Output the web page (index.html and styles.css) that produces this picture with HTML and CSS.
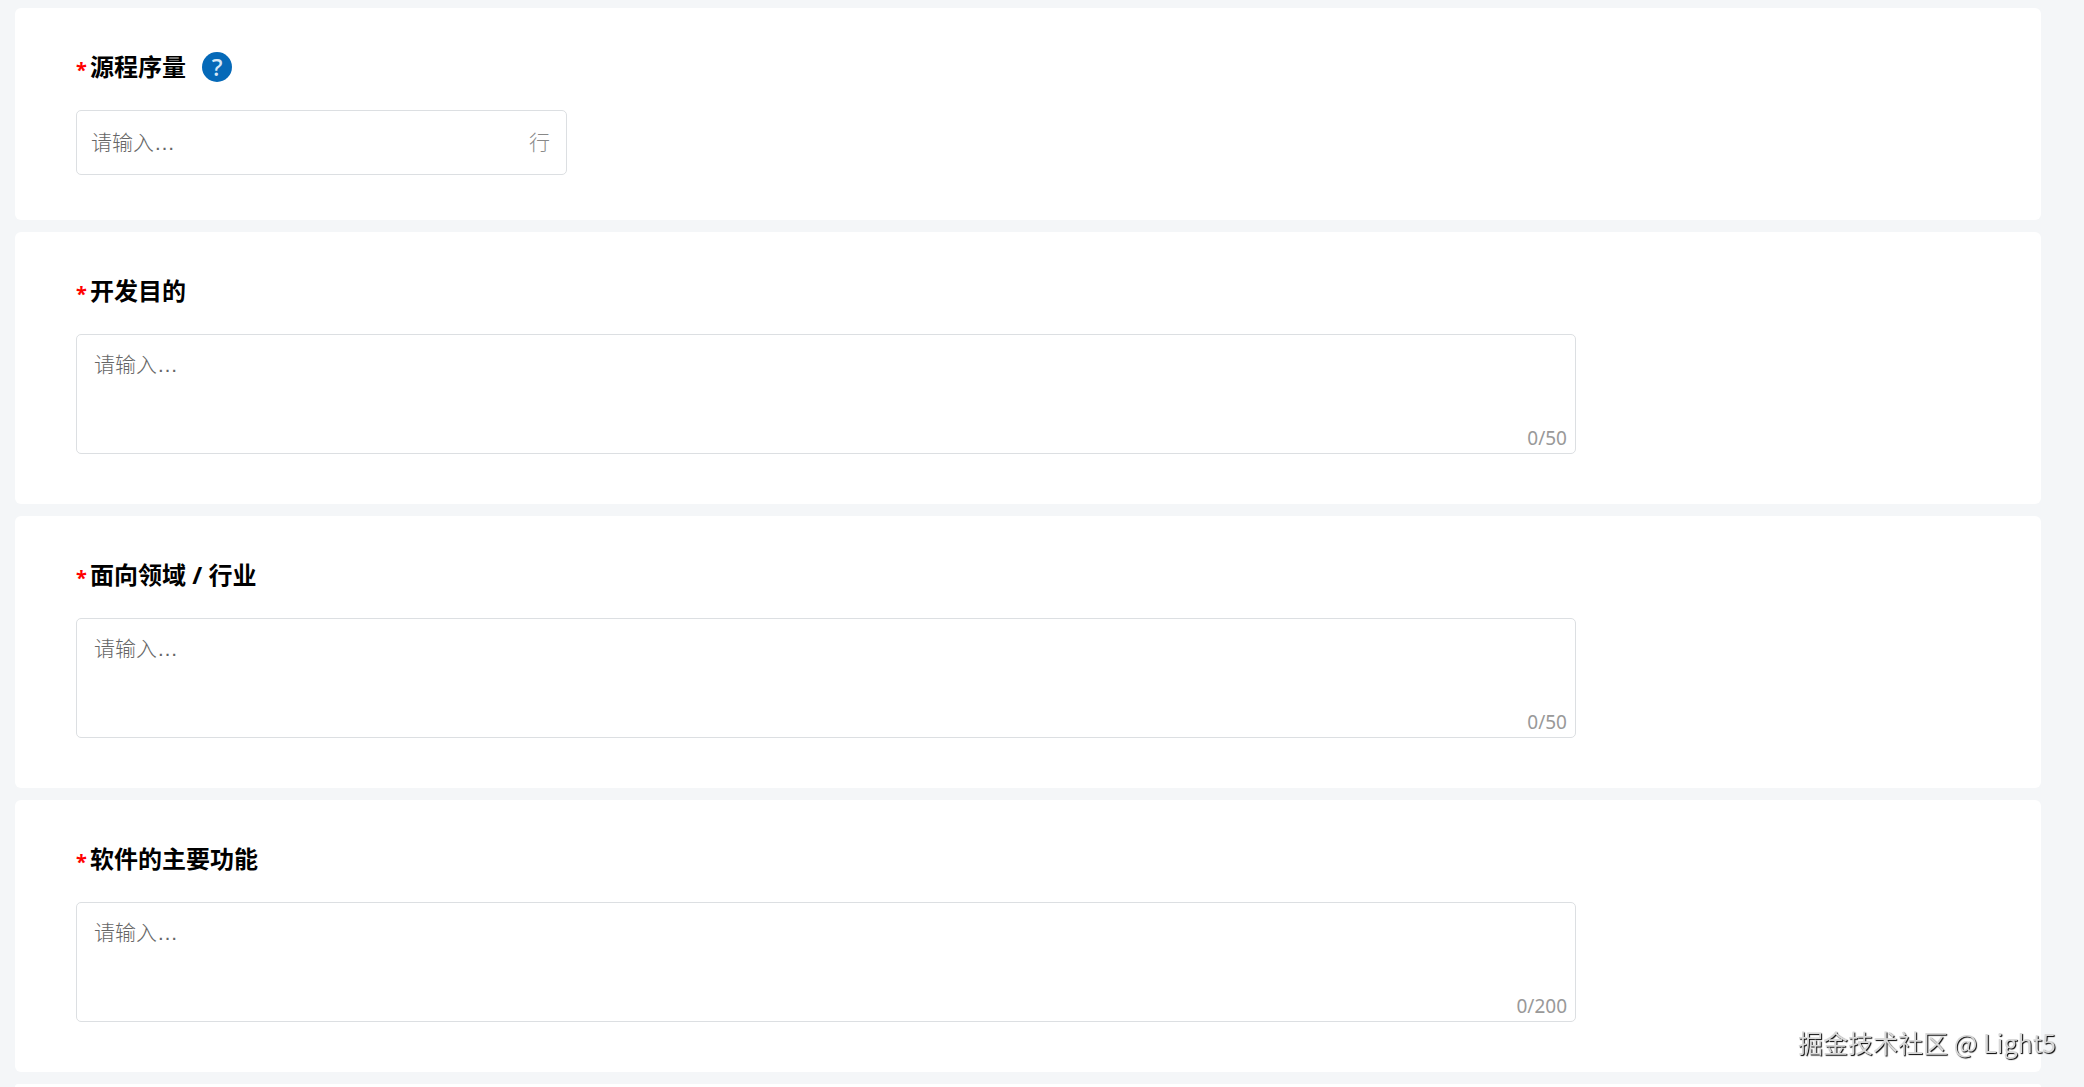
FILE: index.html
```html
<!DOCTYPE html>
<html lang="zh-CN">
<head>
    <meta charset="UTF-8">
    <meta name="viewport" content="width=device-width, initial-scale=1.0">
    <title>软件功能与特点</title>
    <link rel="stylesheet" href="styles.css">
</head>
<body>
    <main>
        <form class="form">
            <section class="card card-short">
                <div class="title">
                    <span class="star">*</span>
                    <label for="code_lines">源程序量</label>
                    <button type="button" class="help">?</button>
                </div>
                <div class="input-box">
                    <input type="text" id="code_lines" name="code_lines" placeholder="请输入…">
                    <span class="unit">行</span>
                </div>
            </section>
            <section class="card">
                <div class="title">
                    <span class="star">*</span>
                    <label for="purpose">开发目的</label>
                </div>
                <div class="textarea-box">
                    <textarea id="purpose" name="purpose" rows="2" maxlength="50" placeholder="请输入…"></textarea>
                    <span class="count">0/50</span>
                </div>
            </section>
            <section class="card">
                <div class="title">
                    <span class="star">*</span>
                    <label for="industry">面向领域 / 行业</label>
                </div>
                <div class="textarea-box">
                    <textarea id="industry" name="industry" rows="2" maxlength="50" placeholder="请输入…"></textarea>
                    <span class="count">0/50</span>
                </div>
            </section>
            <section class="card">
                <div class="title">
                    <span class="star">*</span>
                    <label for="features">软件的主要功能</label>
                </div>
                <div class="textarea-box">
                    <textarea id="features" name="features" rows="2" maxlength="200" placeholder="请输入…"></textarea>
                    <span class="count">0/200</span>
                </div>
            </section>
            <section class="card card-next"></section>
        </form>
    </main>
    <div class="watermark">掘金技术社区 @ Light5</div>
</body>
</html>
```

FILE: styles.css
```css
* {
    box-sizing: border-box;
}

body {
    font-family: "Noto Sans", "Noto Sans CJK SC", sans-serif;
    margin: 0;
    background-color: #f4f6f8;
}

.form {
    display: flex;
    flex-direction: column;
    gap: 12px;
    padding: 8px 43px 0 15px;
}

.card {
    background-color: #fff;
    border-radius: 6px;
    padding: 43px 61px 50px;
}

.card-short {
    padding-bottom: 45px;
}

/* top edge of the following block */
.card-next {
    height: 3px;
    padding: 0;
    border-radius: 6px 6px 0 0;
}

.title {
    display: flex;
    align-items: center;
    height: 32px;
    margin-bottom: 27px;
    color: #000;
    font-size: 24px;
    font-weight: bold;
    line-height: 32px;
}

.star {
    width: 14px;
    color: #f00;
    font-size: 20px;
    padding-top: 6px;
}

.help {
    width: 30px;
    height: 30px;
    margin-left: 16px;
    padding: 0;
    border: none;
    border-radius: 50%;
    background-color: #0569b8;
    color: #d5e8f7;
    font-family: "Noto Sans", sans-serif;
    font-size: 24px;
    font-weight: 500;
    line-height: 30px;
    cursor: pointer;
}

.input-box,
.textarea-box {
    display: flex;
    border: 1px solid #dcdfe2;
    border-radius: 5px;
    background-color: #fff;
}

.input-box {
    align-items: center;
    max-width: 491px;
    height: 65px;
    padding: 0 16px 0 14px;
}

.textarea-box {
    flex-direction: column;
    max-width: 1500px;
    height: 120px;
    padding: 14px 8px 2px 17px;
}

input,
textarea {
    flex: 1;
    min-width: 0;
    border: none;
    outline: none;
    padding: 0;
    background: none;
    font-family: "Liberation Sans", "Noto Sans CJK SC", sans-serif;
    font-size: 21px;
    line-height: 32px;
    resize: none;
}

input::placeholder,
textarea::placeholder {
    color: #666;
    font-weight: 300;
}

.unit {
    color: #888;
    font-family: "Liberation Sans", "Noto Sans CJK SC", sans-serif;
    font-size: 21px;
    font-weight: 300;
    line-height: 32px;
}

.count {
    align-self: flex-end;
    color: #999;
    font-size: 19px;
    line-height: 26px;
}

.watermark {
    position: fixed;
    right: 28px;
    bottom: 25px;
    color: #d8d8d8;
    font-family: "Noto Sans CJK SC", sans-serif;
    font-size: 25px;
    line-height: 40px;
    text-shadow: 1px 1px 1px #000;
}
```
